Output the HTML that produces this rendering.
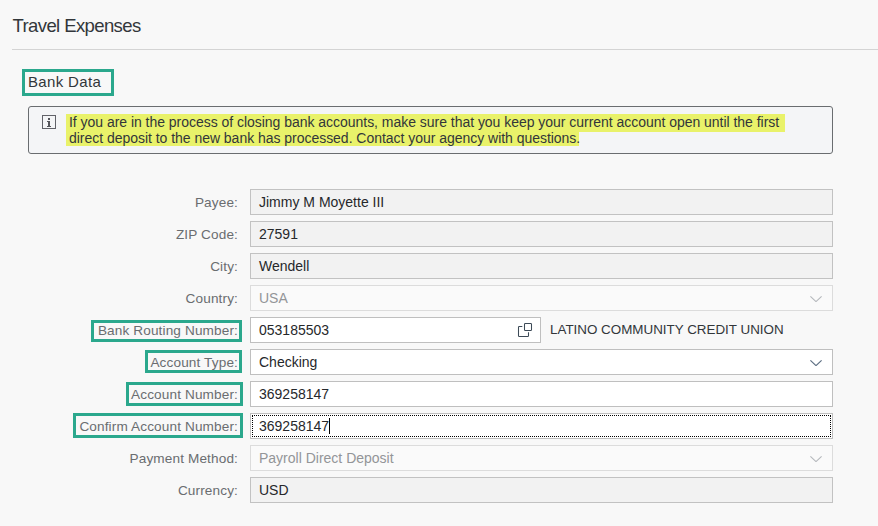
<!DOCTYPE html>
<html><head><meta charset="utf-8">
<style>
*{box-sizing:border-box;margin:0;padding:0}
html,body{width:878px;height:526px;overflow:hidden;background:#f8f8f8;font-family:"Liberation Sans",sans-serif;color:#32363a}
.abs{position:absolute}
#title{left:12.5px;top:15px;font-size:18.5px;letter-spacing:-0.6px;color:#32363a;white-space:nowrap}
#hr{left:12px;top:49px;width:866px;height:1px;background:#d4d4d4}
#bd{left:22px;top:69px;width:92px;height:27px;border:3px solid #2ba88d}
#bdt{left:28px;top:73px;font-size:15px;letter-spacing:0.35px;color:#32363a;white-space:nowrap}
#ms{left:28px;top:106px;width:805px;height:48px;border:1px solid #6a6d70;border-radius:3px;background:#f4f5f7}
.hl{position:absolute;background:#e9f26a}
#mt{left:69px;top:115px;font-size:14px;letter-spacing:-0.03px;line-height:15.5px;color:#32363a;white-space:nowrap}
.lbl{position:absolute;right:640px;font-size:13.6px;letter-spacing:0.13px;color:#6a6d70;white-space:nowrap;text-align:right}
.inp{position:absolute;left:250px;width:583px;height:26px;border:1px solid #c2c2c2;background:#f2f2f2;font-size:14px;padding-left:8px;line-height:24px;color:#26282b;white-space:nowrap}
.inp.w{background:#fff;border-color:#bfbfbf}
.inp.dis{background:#fafafa;border-color:#dcdcdc;color:#939598}
.chev{position:absolute;right:10px;top:10px;width:12px;height:6px}
.ann{position:absolute;border:3px solid #2ba88d}
</style></head><body>
<div id="title" class="abs">Travel Expenses</div>
<div id="hr" class="abs"></div>
<div id="bd" class="abs"></div>
<div id="bdt" class="abs">Bank Data</div>
<div id="ms" class="abs"></div>
<svg class="abs" style="left:42px;top:115px" width="14" height="14" viewBox="0 0 14 14"><rect x="0.5" y="0.5" width="13" height="13" fill="none" stroke="#616269" stroke-width="1"/><rect x="6" y="3" width="2" height="2" fill="#55565c"/><rect x="6" y="6" width="2" height="6" fill="#55565c"/><rect x="5" y="6" width="1" height="1" fill="#55565c"/><rect x="5" y="11" width="4" height="1" fill="#55565c"/></svg>
<div class="hl" style="left:66px;top:114px;width:719px;height:18px"></div>
<div class="hl" style="left:66px;top:132px;width:513px;height:14px"></div>
<div id="mt" class="abs">If you are in the process of closing bank accounts, make sure that you keep your current account open until the first<br>direct deposit to the new bank has processed. Contact your agency with questions.</div>

<div class="lbl" style="top:195px">Payee:</div>
<div class="inp" style="top:189px">Jimmy M Moyette III</div>

<div class="lbl" style="top:227px">ZIP Code:</div>
<div class="inp" style="top:221px">27591</div>

<div class="lbl" style="top:259px">City:</div>
<div class="inp" style="top:253px">Wendell</div>

<div class="lbl" style="top:291px">Country:</div>
<div class="inp dis" style="top:285px">USA<svg class="chev" viewBox="0 0 12 6"><path d="M0.4 0.4 L6 5.6 L11.6 0.4" fill="none" stroke="#b5b8bc" stroke-width="1.1"/></svg></div>

<div class="ann" style="left:91px;top:320px;width:151px;height:22px"></div>
<div class="lbl" style="top:323px">Bank Routing Number:</div>
<div class="inp w" style="top:317px;width:291px">053185503</div>
<svg class="abs" style="left:516px;top:322px" width="18" height="16" viewBox="0 0 18 16"><path d="M6.3 4.5 H3.3 Q2.5 4.5 2.5 5.3 V13.7 Q2.5 14.5 3.3 14.5 H11.7 Q12.5 14.5 12.5 13.7 V10.2" fill="none" stroke="#3d4a57" stroke-width="1.05"/><rect x="8.5" y="1.5" width="7" height="7" rx="0.8" fill="none" stroke="#3d4a57" stroke-width="1.05"/></svg>
<div class="abs" style="left:550px;top:322px;font-size:13.4px;color:#32363a;white-space:nowrap">LATINO COMMUNITY CREDIT UNION</div>

<div class="ann" style="left:145px;top:350px;width:97px;height:23px"></div>
<div class="lbl" style="top:355px">Account Type:</div>
<div class="inp w" style="top:349px">Checking<svg class="chev" viewBox="0 0 12 6"><path d="M0.4 0.4 L6 5.6 L11.6 0.4" fill="none" stroke="#5d6f83" stroke-width="1.2"/></svg></div>

<div class="ann" style="left:126px;top:382px;width:117px;height:24px"></div>
<div class="lbl" style="top:387px">Account Number:</div>
<div class="inp w" style="top:381px">369258147</div>

<div class="ann" style="left:73px;top:413px;width:170px;height:25px"></div>
<div class="lbl" style="top:419px">Confirm Account Number:</div>
<div class="inp w" style="top:413px;outline:1px dotted #000;outline-offset:-3px">369258147</div>
<div class="abs" style="left:329px;top:418px;width:1px;height:16px;background:#000"></div>

<div class="lbl" style="top:451px">Payment Method:</div>
<div class="inp dis" style="top:445px">Payroll Direct Deposit<svg class="chev" viewBox="0 0 12 6"><path d="M0.4 0.4 L6 5.6 L11.6 0.4" fill="none" stroke="#b5b8bc" stroke-width="1.1"/></svg></div>

<div class="lbl" style="top:483px">Currency:</div>
<div class="inp" style="top:477px">USD</div>
</body></html>
